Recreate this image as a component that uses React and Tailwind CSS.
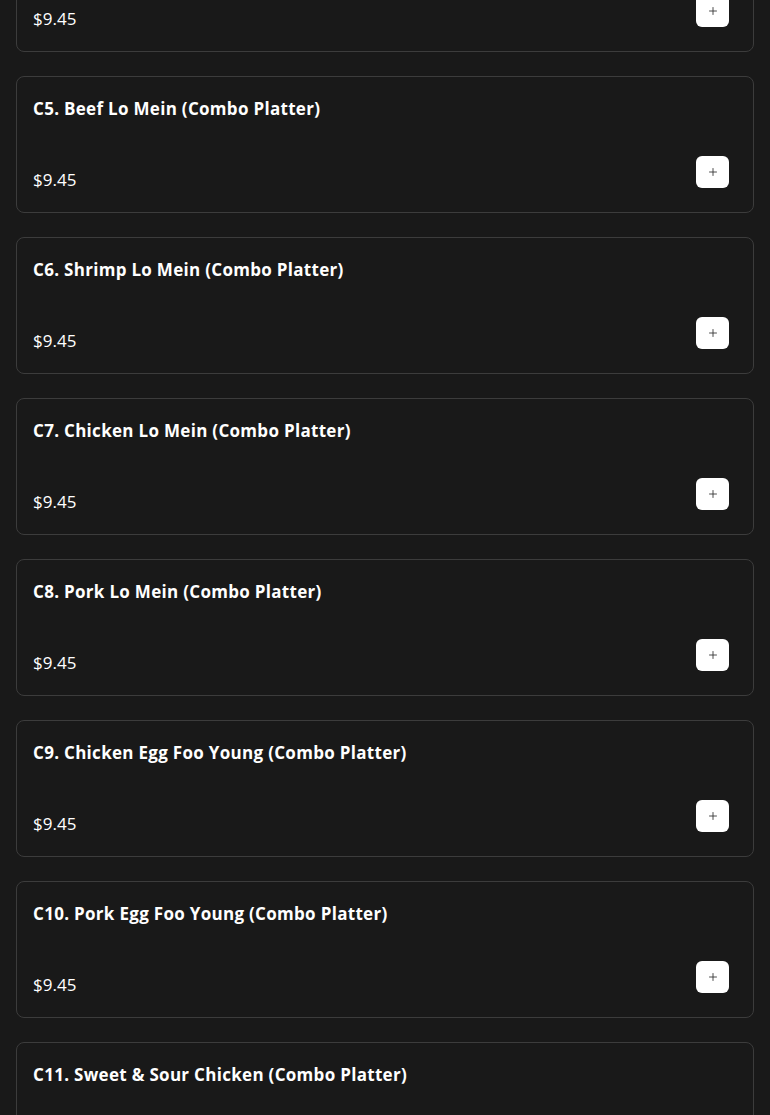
import React from 'react';
import { Plus } from 'lucide-react';

const items = [
  'C4. Chicken Chow Mein (Combo Platter)',
  'C5. Beef Lo Mein (Combo Platter)',
  'C6. Shrimp Lo Mein (Combo Platter)',
  'C7. Chicken Lo Mein (Combo Platter)',
  'C8. Pork Lo Mein (Combo Platter)',
  'C9. Chicken Egg Foo Young (Combo Platter)',
  'C10. Pork Egg Foo Young (Combo Platter)',
  'C11. Sweet & Sour Chicken (Combo Platter)',
  'C12. Shrimp with Broccoli (Combo Platter)',
];

const MenuCard = ({ name, price }) => (
  <div className="border border-[#3c3c3c] rounded-lg bg-[#191919] px-4 pt-[18px] pb-6">
    <h3 className="text-[17px] leading-7 font-bold text-white tracking-[0.3px]">{name}</h3>
    <div className="flex justify-between items-end mt-[33px]">
      <p className="text-[17px] leading-6 text-white -mb-[4px]">{price}</p>
      {/* add to cart */}
      <button
        type="button"
        className="w-[33px] h-[32px] mr-2 bg-white rounded-md flex items-center justify-center"
      >
        <Plus className="w-3 h-3 text-[#333]" strokeWidth={1.75} />
      </button>
    </div>
  </div>
);

export default function App() {
  return (
    <div
      className="min-h-screen bg-[#191919] overflow-hidden"
      style={{ fontFamily: '"Open Sans", "Noto Sans", sans-serif' }}
    >
      <div className="px-4 -mt-[85px] flex flex-col gap-6">
        {items.map((name) => (
          <MenuCard key={name} name={name} price="$9.45" />
        ))}
      </div>
    </div>
  );
}
